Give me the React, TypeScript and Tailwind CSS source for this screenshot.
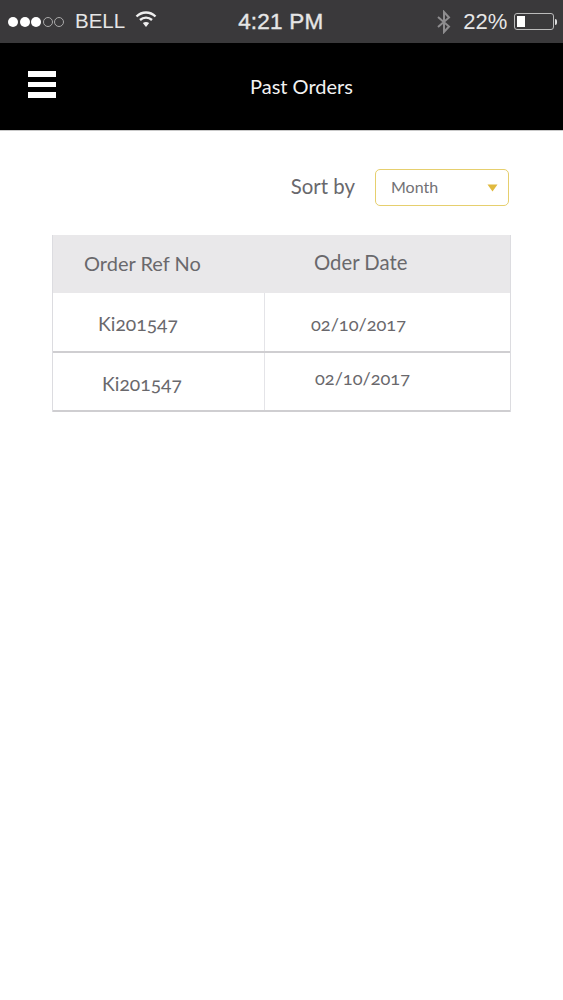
import React from "react";

function Wifi() {
  return (
    <svg width="22" height="18" viewBox="0 0 22 18" className="text-[#eeeeee]">
      <path d="M1.5 6.5 C7 1.2 15 1.2 20.5 6.5" fill="none" stroke="currentColor" strokeWidth="2.4" />
      <path d="M5 10 C8.5 6.8 13.5 6.8 17 10" fill="none" stroke="currentColor" strokeWidth="2.4" />
      <path d="M7.8 13 C9.8 11.6 12.2 11.6 14.2 13 L11 17 Z" fill="currentColor" />
    </svg>
  );
}

function Bluetooth() {
  return (
    <svg width="16" height="24" viewBox="0 0 16 24" className="text-[#8e8d8f]">
      <path d="M2 7 L13 16.5 L8 22 L8 2 L13 7.5 L2 17" fill="none" stroke="currentColor" strokeWidth="2" />
    </svg>
  );
}

function Row({ leftPad, leftTop, rightPad, rightTop, height }: { leftPad: string; leftTop: string; rightPad: string; rightTop: string; height: string }) {
  return (
    <div className={`flex ${height} border-b-2 border-[#cfced1]`}>
      <div className={`w-[212px] border-r border-[#e4e4e8] text-[19.3px] leading-6 text-[#69686c] oldstyle-nums ${leftPad} ${leftTop}`}>Ki201547</div>
      <div className={`flex-1 text-[18.2px] leading-6 text-[#69686c] oldstyle-nums ${rightPad} ${rightTop}`}>02/10/2017</div>
    </div>
  );
}

export default function App() {
  return (
    <div className="min-h-[1000px] w-[563px] bg-white font-['Lato',sans-serif]">
      <div className="flex h-[43px] items-center bg-[#3a393b] font-['Liberation_Sans',sans-serif] text-[#e6e6e6]">
        <div className="ml-2 flex w-[60px] items-center gap-[1.5px]">
          <span className="h-[10px] w-[10px] rounded-full bg-white" />
          <span className="h-[10px] w-[10px] rounded-full bg-white" />
          <span className="h-[10px] w-[10px] rounded-full bg-white" />
          <span className="h-[10px] w-[10px] rounded-full border border-[#aaaaaa]" />
          <span className="h-[10px] w-[10px] rounded-full border border-[#aaaaaa]" />
        </div>
        <span className="ml-[7px] text-[20.5px]">BELL</span>
        <span className="ml-[10px] -mt-[6px]"><Wifi /></span>
        <span className="ml-[81px] text-[22.5px] tracking-[0.2px] [-webkit-text-stroke:0.4px_#e6e6e6]">4:21 PM</span>
        <span className="ml-[113px]"><Bluetooth /></span>
        <span className="ml-[11px] text-[22px]">22%</span>
        <div className="ml-[7px] flex items-center">
          <div className="flex h-[17px] w-[40px] items-stretch rounded-[3px] border border-[#bbbbbb] p-[2px]">
            <div className="w-[8px] bg-white" />
          </div>
          <div className="ml-[1px] h-[6px] w-[2px] rounded-r-sm bg-[#dddddd]" />
        </div>
      </div>

      <div className="flex h-[88px] items-center border-b border-[#c9c9c9] bg-black">
        <div className="ml-[28px] -mt-[5px] flex w-[28px] flex-col gap-[5px]">
          <span className="h-[6px] bg-white" />
          <span className="h-[5.5px] bg-white" />
          <span className="h-[5.5px] bg-white" />
        </div>
        <div className="ml-[194px] -mt-[2px] text-[20px] text-[#f2f2f2]">Past Orders</div>
      </div>

      <div className="flex items-center justify-end pr-[54px] pt-[38px]">
        <span className="-mt-[2px] text-[20.4px] text-[#69686c]">Sort by</span>
        <div className="ml-[20px] flex h-[37px] w-[134px] items-center justify-between rounded-[5px] border border-[#e6cf6e] pl-[15px] pr-[10px]">
          <span className="-mt-[2px] text-[16px] text-[#727175]">Month</span>
          <svg width="11" height="8" viewBox="0 0 11 8">
            <path d="M0.5 0.5 H10.5 L5.5 7.5 Z" fill="#e0b93e" />
          </svg>
        </div>
      </div>

      <div className="ml-[52px] mt-[29px] w-[459px] border-x border-[#dcdce0]">
        <div className="flex h-[58px] bg-[#e9e8ea]">
          <div className="w-[212px] pl-[31px] pt-[16px] text-[20px] leading-6 text-[#69686c]">Order Ref No</div>
          <div className="flex-1 pl-[49px] pt-[15px] text-[20.3px] leading-6 text-[#69686c]">Oder Date</div>
        </div>
        <Row height="h-[60px]" leftPad="pl-[45px]" leftTop="pt-[19px]" rightPad="pl-[46px]" rightTop="pt-[19px]" />
        <Row height="h-[59px]" leftPad="pl-[49px]" leftTop="pt-[19px]" rightPad="pl-[50px]" rightTop="pt-[13px]" />
      </div>
    </div>
  );
}
